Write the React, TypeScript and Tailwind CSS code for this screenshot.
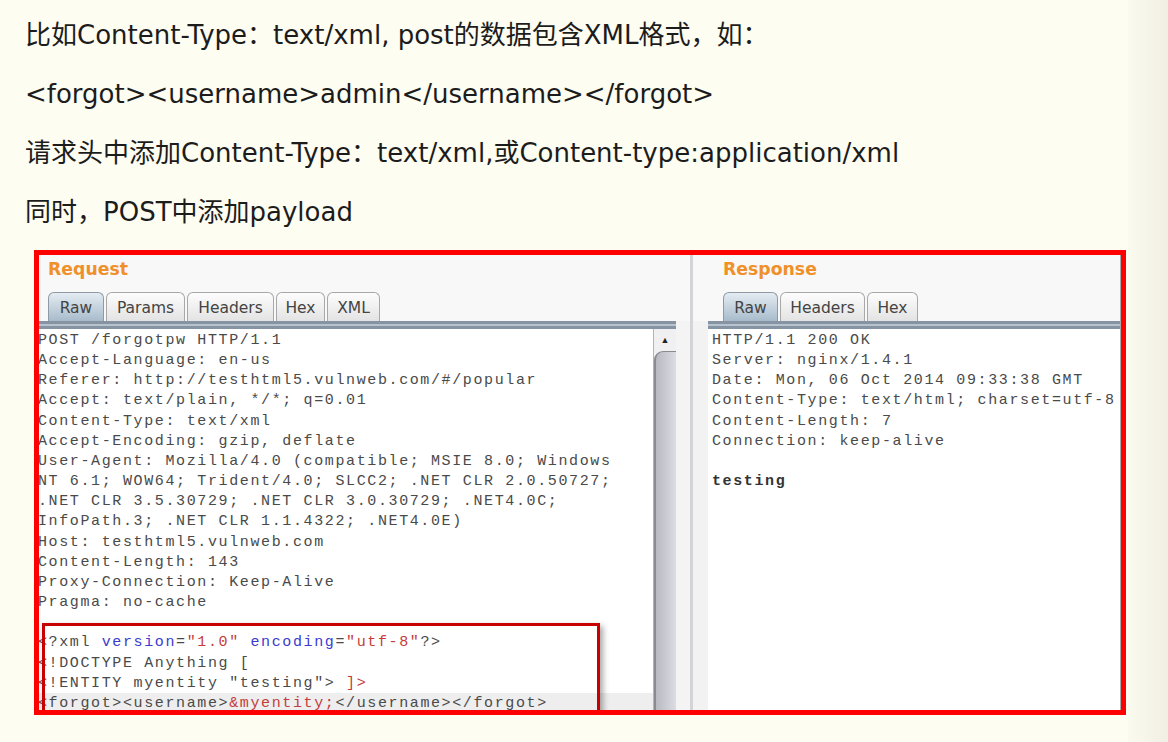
import React from "react";

type Seg = { t: string; c?: string };

const request: Seg[][] = [
  [{ t: "POST /forgotpw HTTP/1.1" }],
  [{ t: "Accept-Language: en-us" }],
  [{ t: "Referer: http://testhtml5.vulnweb.com/#/popular" }],
  [{ t: "Accept: text/plain, */*; q=0.01" }],
  [{ t: "Content-Type: text/xml" }],
  [{ t: "Accept-Encoding: gzip, deflate" }],
  [{ t: "User-Agent: Mozilla/4.0 (compatible; MSIE 8.0; Windows" }],
  [{ t: "NT 6.1; WOW64; Trident/4.0; SLCC2; .NET CLR 2.0.50727;" }],
  [{ t: ".NET CLR 3.5.30729; .NET CLR 3.0.30729; .NET4.0C;" }],
  [{ t: "InfoPath.3; .NET CLR 1.1.4322; .NET4.0E)" }],
  [{ t: "Host: testhtml5.vulnweb.com" }],
  [{ t: "Content-Length: 143" }],
  [{ t: "Proxy-Connection: Keep-Alive" }],
  [{ t: "Pragma: no-cache" }],
  [{ t: " " }],
  [
    { t: "<?xml " },
    { t: "version", c: "text-[#3b3bd0]" },
    { t: "=" },
    { t: '"1.0"', c: "text-[#c43c3c]" },
    { t: " " },
    { t: "encoding", c: "text-[#3b3bd0]" },
    { t: "=" },
    { t: '"utf-8"', c: "text-[#c43c3c]" },
    { t: "?>" },
  ],
  [{ t: "<!DOCTYPE Anything [" }],
  [{ t: '<!ENTITY myentity "testing"> ' }, { t: "]>", c: "text-[#c43c3c]" }],
  [
    { t: "<forgot><username>" },
    { t: "&myentity;", c: "text-[#c43c3c]" },
    { t: "</username></forgot>" },
  ],
];

const response = [
  "HTTP/1.1 200 OK",
  "Server: nginx/1.4.1",
  "Date: Mon, 06 Oct 2014 09:33:38 GMT",
  "Content-Type: text/html; charset=utf-8",
  "Content-Length: 7",
  "Connection: keep-alive",
  " ",
];

function Tab({ label, w, active }: { label: string; w: string; active?: boolean }) {
  return (
    <div
      className={
        "h-[29px] pt-[3px] flex items-center justify-center rounded-t-[6px] border border-b-0 text-[15.5px] text-[#444] " +
        w +
        (active
          ? " bg-linear-to-b from-[#e4ecf2] to-[#a8bbcb] border-[#8e9aa6]"
          : " bg-linear-to-b from-[#fdfdfd] to-[#e3e3e3] border-[#a8a8a8]")
      }
    >
      {label}
    </div>
  );
}

function TabBar() {
  return <div className="h-[8px] shrink-0 border-y-[3px] border-[#8593a2] bg-[#b7c3cf]" />;
}

export default function App() {
  const sans = "font-['DejaVu_Sans','Noto_Sans_CJK_SC',sans-serif]";
  // smaller glyphs with extra tracking, to get Courier-like proportions at the same advance
  const mono =
    "font-['Liberation_Mono','Courier_New',monospace] text-[15px] tracking-[1.62px] leading-[20.15px] whitespace-pre text-[#4a4a4a]";

  return (
    <div className="h-[742px] w-[1168px] overflow-hidden flex bg-[#fefdf2]">
      <div className="w-[1128px] shrink-0">
        <div className={"pl-[25px] pt-[6px] text-[26px] leading-[59px] text-[#1c1c1c] " + sans}>
          <p>比如Content-Type：text/xml, post的数据包含XML格式，如：</p>
          <p>&lt;forgot&gt;&lt;username&gt;admin&lt;/username&gt;&lt;/forgot&gt;</p>
          <p>请求头中添加Content-Type：text/xml,或Content-type:application/xml</p>
          <p>同时，POST中添加payload</p>
        </div>

        <div className="ml-[34px] mt-[8px] w-[1092px] h-[465px] border-[5px] border-[#ff0000] flex overflow-hidden bg-white">
          {/* Request */}
          <div className="w-[651px] flex flex-col min-h-0">
            <div className={"h-[66px] shrink-0 bg-[#f8f8f8] flex flex-col pl-[9px] " + sans}>
              <div className="pt-[4px] h-[37px] text-[17.3px] leading-[20px] font-bold text-[#f0902a]">Request</div>
              <div className="flex gap-[2px]">
                <Tab label="Raw" w="w-[56px]" active />
                <Tab label="Params" w="w-[79px]" />
                <Tab label="Headers" w="w-[87px]" />
                <Tab label="Hex" w="w-[49px]" />
                <Tab label="XML" w="w-[53px]" />
              </div>
            </div>
            <div className="flex-1 flex min-h-0">
              <div className="w-[637px] flex flex-col min-h-0">
                <TabBar />
                <div className="flex-1 flex min-h-0">
                  <div className="w-[614px] relative overflow-hidden bg-white">
                    <div className="absolute left-0 right-0 top-[364px] h-[20px] bg-[#eeeeee]" />
                    <div className={"relative -ml-[1px] pt-[2px] " + mono}>
                      {request.map((line, i) => (
                        <div key={i}>
                          {line.map((s, j) => (
                            <span key={j} className={s.c}>
                              {s.t}
                            </span>
                          ))}
                        </div>
                      ))}
                    </div>
                    <div className="absolute left-[3px] top-[294px] w-[558px] h-[95px] border-[3px] border-[#c80000] shadow-[3px_3px_6px_rgba(0,0,0,0.35)]" />
                  </div>
                  <div className="w-[23px] flex flex-col bg-[#f0f0f2] border-l border-[#b4b4b8]">
                    <div className="h-[22px] flex items-center justify-center text-[9px] text-[#222]">▲</div>
                    <div className="flex-1 rounded-tl-[9px] border-l-[2px] border-t border-[#8a8a90] bg-linear-to-r from-[#b9b9c1] to-[#dcdce3]" />
                  </div>
                </div>
              </div>
              <div className="w-[14px] bg-[#f4f4f4]" />
            </div>
          </div>

          {/* divider */}
          <div className="w-[3px] bg-[#d4d4d8]" />

          {/* Response */}
          <div className="flex-1 flex flex-col min-h-0 border-r border-[#a8a8a8]">
            <div className={"h-[66px] shrink-0 bg-[#f8f8f8] flex flex-col pl-[30px] " + sans}>
              <div className="pt-[4px] h-[37px] text-[17.3px] leading-[20px] font-bold text-[#f0902a]">Response</div>
              <div className="flex gap-[2px]">
                <Tab label="Raw" w="w-[55px]" active />
                <Tab label="Headers" w="w-[85px]" />
                <Tab label="Hex" w="w-[51px]" />
              </div>
            </div>
            <div className="flex-1 flex min-h-0">
              <div className="w-[15px] bg-[#f2f2f2]" />
              <div className="flex-1 flex flex-col min-w-0 min-h-0">
                <TabBar />
                <div className={"flex-1 bg-white overflow-hidden pl-[4px] pt-[2px] " + mono}>
                  {response.map((l, i) => (
                    <div key={i}>{l}</div>
                  ))}
                  <div className="font-bold text-[#333]">testing</div>
                </div>
              </div>
            </div>
          </div>
        </div>
      </div>
      <div className="flex-1 bg-linear-to-r from-[#fbfaef] to-[#f1efe3]" />
    </div>
  );
}
